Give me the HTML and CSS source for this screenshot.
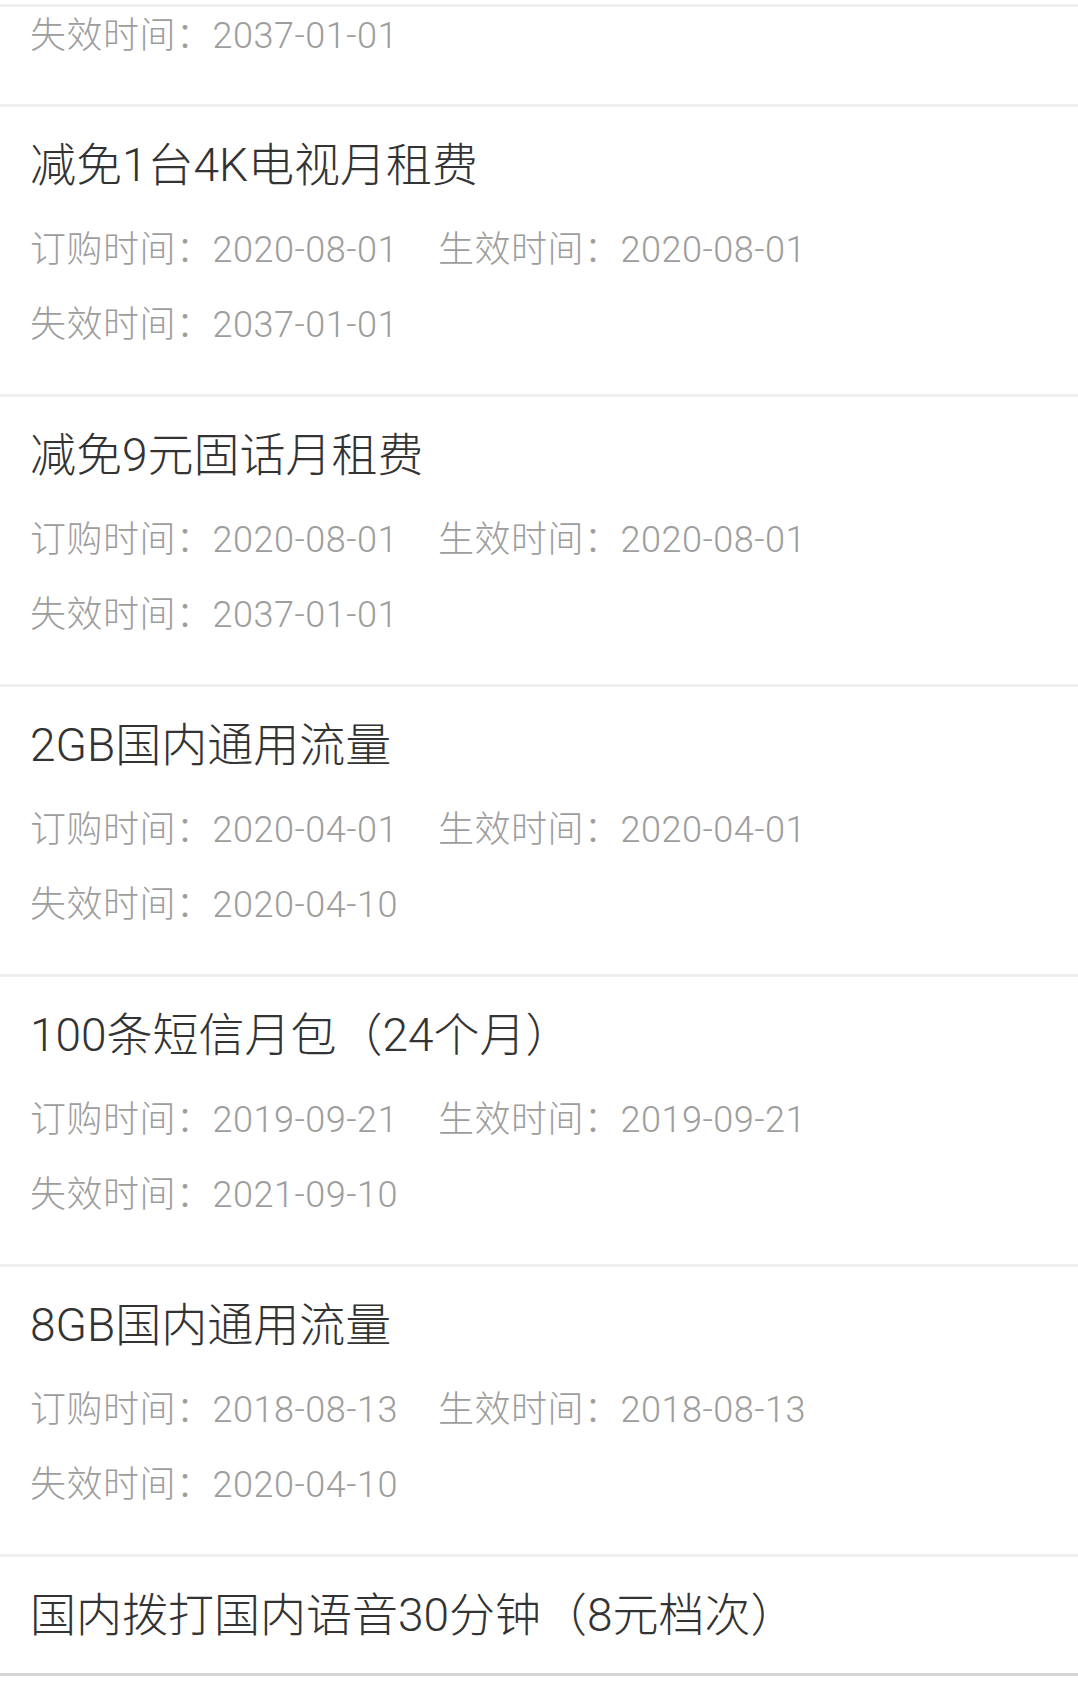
FILE: index.html
```html
<!DOCTYPE html>
<html lang="zh-CN">
<head>
    <meta charset="UTF-8">
    <meta name="viewport" content="width=device-width, initial-scale=1.0">
    <title>已订购业务</title>
    <link rel="stylesheet" href="styles.css">
</head>
<body>
    <div class="top-edge"></div>

    <div class="list">
        <div class="card tail">
            <div class="row"><span>失效时间：2037-01-01</span></div>
        </div>

        <div class="card">
            <div class="title">减免1台4K电视月租费</div>
            <div class="row"><span>订购时间：2020-08-01</span><span>生效时间：2020-08-01</span></div>
            <div class="row"><span>失效时间：2037-01-01</span></div>
        </div>

        <div class="card">
            <div class="title">减免9元固话月租费</div>
            <div class="row"><span>订购时间：2020-08-01</span><span>生效时间：2020-08-01</span></div>
            <div class="row"><span>失效时间：2037-01-01</span></div>
        </div>

        <div class="card">
            <div class="title">2GB国内通用流量</div>
            <div class="row"><span>订购时间：2020-04-01</span><span>生效时间：2020-04-01</span></div>
            <div class="row"><span>失效时间：2020-04-10</span></div>
        </div>

        <div class="card">
            <div class="title">100条短信月包（24个月）</div>
            <div class="row"><span>订购时间：2019-09-21</span><span>生效时间：2019-09-21</span></div>
            <div class="row"><span>失效时间：2021-09-10</span></div>
        </div>

        <div class="card">
            <div class="title">8GB国内通用流量</div>
            <div class="row"><span>订购时间：2018-08-13</span><span>生效时间：2018-08-13</span></div>
            <div class="row"><span>失效时间：2020-04-10</span></div>
        </div>

        <div class="card last">
            <div class="title">国内拨打国内语音30分钟（8元档次）</div>
        </div>
    </div>
</body>
</html>
```

FILE: styles.css
```css
body {
    margin: 0;
    background: #fff;
    font-family: Roboto, "Noto Sans CJK SC", sans-serif;
    font-weight: 300;
}
.top-edge {
    height: 4px;
    border-bottom: 3px solid #efefef;
}
.card {
    padding: 35px 30px 31px;
    border-bottom: 3px solid #efefef;
}
.title {
    font-size: 46px;
    line-height: 46px;
    color: #333;
    margin-bottom: 25px;
}
.row {
    display: flex;
    font-size: 36px;
    line-height: 75px;
    color: #9d9d9d;
    letter-spacing: 0.5px;
    white-space: nowrap;
}
.row span:first-child {
    width: 408px;
}
.card.tail {
    padding-top: 0;
    padding-bottom: 38px;
}
.tail .row {
    line-height: 59px;
}
.card.last {
    padding-bottom: 35px;
    border-bottom-color: #d4d4d4;
}
.last .title {
    margin-bottom: 0;
}
```
